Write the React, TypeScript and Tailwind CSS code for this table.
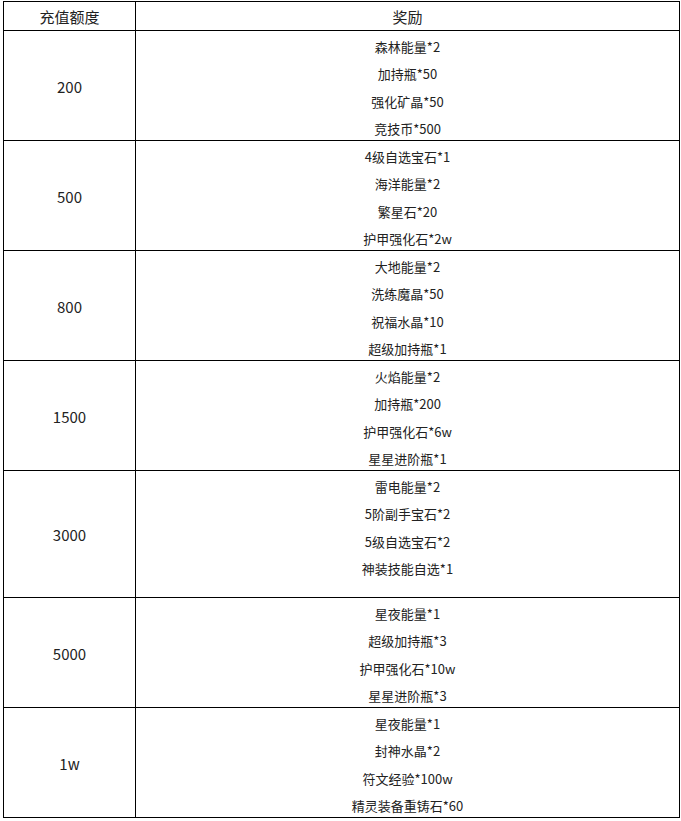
const rows: { amount: string; rewards: string[]; h: string }[] = [
  { amount: "200", rewards: ["森林能量*2", "加持瓶*50", "强化矿晶*50", "竞技币*500"], h: "h-[110px]" },
  { amount: "500", rewards: ["4级自选宝石*1", "海洋能量*2", "繁星石*20", "护甲强化石*2w"], h: "h-[110px]" },
  { amount: "800", rewards: ["大地能量*2", "洗练魔晶*50", "祝福水晶*10", "超级加持瓶*1"], h: "h-[110px]" },
  { amount: "1500", rewards: ["火焰能量*2", "加持瓶*200", "护甲强化石*6w", "星星进阶瓶*1"], h: "h-[110px]" },
  { amount: "3000", rewards: ["雷电能量*2", "5阶副手宝石*2", "5级自选宝石*2", "神装技能自选*1"], h: "h-[127px]" },
  { amount: "5000", rewards: ["星夜能量*1", "超级加持瓶*3", "护甲强化石*10w", "星星进阶瓶*3"], h: "h-[110px]" },
  { amount: "1w", rewards: ["星夜能量*1", "封神水晶*2", "符文经验*100w", "精灵装备重铸石*60"], h: "h-[110px]" },
];

export default function App() {
  return (
    <div
      className="min-h-screen bg-white pt-[1px] pl-[3px] text-[#222]"
      style={{ fontFamily: '"Noto Sans CJK SC", "Noto Sans", sans-serif' }}
    >
      <div className="grid w-[677px] grid-cols-[132px_544px] border-l border-t border-black">
        <div className="flex h-[29px] items-center justify-center border-b border-r border-black pt-[3px] text-[15px]">
          充值额度
        </div>
        <div className="flex h-[29px] items-center justify-center border-b border-r border-black pt-[3px] text-[15px]">
          奖励
        </div>
        {rows.map((r) => (
          <Row key={r.amount} {...r} />
        ))}
      </div>
    </div>
  );
}

function Row({ amount, rewards, h }: { amount: string; rewards: string[]; h: string }) {
  return (
    <>
      <div className={`flex items-center justify-center border-b border-r border-black pt-[3px] text-[15px] ${h}`}>
        {amount}
      </div>
      <div className={`flex flex-col items-center border-b border-r border-black pt-[2px] text-[13px] ${h}`}>
        {rewards.map((t) => (
          <p key={t} className="leading-[27.3px]">
            {t}
          </p>
        ))}
      </div>
    </>
  );
}
